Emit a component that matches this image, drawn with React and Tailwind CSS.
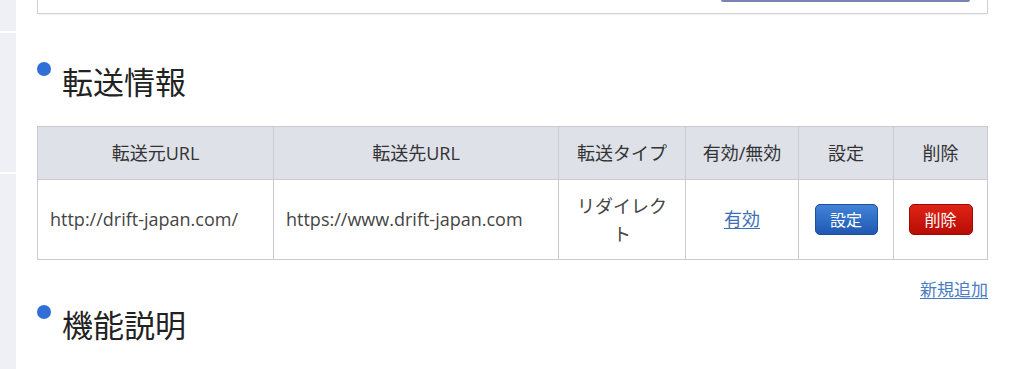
import React from 'react';

const font = { fontFamily: '"Open Sans", "Noto Sans CJK JP", sans-serif' };

const SectionTitle = ({ children }) => (
  <div className="flex items-start">
    <span className="mt-[1px] h-[14px] w-[14px] shrink-0 rounded-full bg-[#2f6fd6]" />
    <h2
      className="ml-[11px] text-[31px] leading-[40px] font-normal text-[#222]"
      style={{ fontFamily: '"Noto Sans CJK JP", sans-serif' }}
    >
      {children}
    </h2>
  </div>
);

const th = 'border border-[#c9cbd0] bg-[#dee1e8] px-2 text-center text-[18px] font-normal text-[#333]';
const td = 'border border-[#c9cbd0] bg-white text-[18px] text-[#444]';

const App = () => {
  return (
    <div className="flex min-h-[369px] bg-white" style={font}>
      {/* side strip */}
      <div className="flex w-4 flex-col">
        <div className="h-[31px] bg-[#eef0f5]" />
        <div className="h-[2px] bg-white" />
        <div className="h-[139px] bg-[#eef0f5]" />
        <div className="h-[2px] bg-white" />
        <div className="flex-1 bg-[#eef0f5]" />
      </div>

      <main className="flex-1 pl-[21px] pr-[36px]">
        {/* previous card, bottom edge */}
        <div className="flex h-[14px] justify-end border-x border-b border-[#cfd1d6] pr-[17px] shadow-[0_1px_2px_rgba(0,0,0,0.06)]">
          <div className="h-[2px] w-[249px] rounded-b bg-[#7884b6]" />
        </div>

        <div className="mt-[47px]">
          <SectionTitle>転送情報</SectionTitle>
        </div>

        <table className="mt-[25px] w-full border-collapse">
          <thead>
            <tr className="h-[53px]">
              <th className={`${th} w-[236px]`}>転送元URL</th>
              <th className={`${th} w-[285px]`}>転送先URL</th>
              <th className={`${th} w-[127px]`}>転送タイプ</th>
              <th className={`${th} w-[113px]`}>有効/無効</th>
              <th className={`${th} w-[95px]`}>設定</th>
              <th className={th}>削除</th>
            </tr>
          </thead>
          <tbody>
            <tr className="h-[80px]">
              <td className={`${td} px-[12px]`}>http://drift-japan.com/</td>
              <td className={`${td} px-[12px]`}>https://www.drift-japan.com</td>
              <td className={`${td} px-[12px] text-center leading-[28px]`}>
                <div className="mx-auto max-w-[92px]">リダイレクト</div>
              </td>
              <td className={`${td} text-center`}>
                <a href="#" className="text-[#3b6fb6] underline underline-offset-2">有効</a>
              </td>
              <td className={`${td} text-center`}>
                <button className="h-[31px] w-[63px] rounded-[5px] border border-[#1d4f9c] bg-gradient-to-b from-[#4283d8] to-[#2058b2] text-[16px] text-white">
                  設定
                </button>
              </td>
              <td className={`${td} text-center`}>
                <button className="h-[31px] w-[64px] rounded-[5px] border border-[#9c0c06] bg-gradient-to-b from-[#df2315] to-[#b80c04] text-[16px] text-white">
                  削除
                </button>
              </td>
            </tr>
          </tbody>
        </table>

        <div className="mt-[18px] flex justify-end">
          <a href="#" className="text-[17px] leading-[24px] text-[#4a7cc4] underline underline-offset-2">新規追加</a>
        </div>

        <div className="mt-[2px]">
          <SectionTitle>機能説明</SectionTitle>
        </div>
      </main>
    </div>
  );
};

export default App;
